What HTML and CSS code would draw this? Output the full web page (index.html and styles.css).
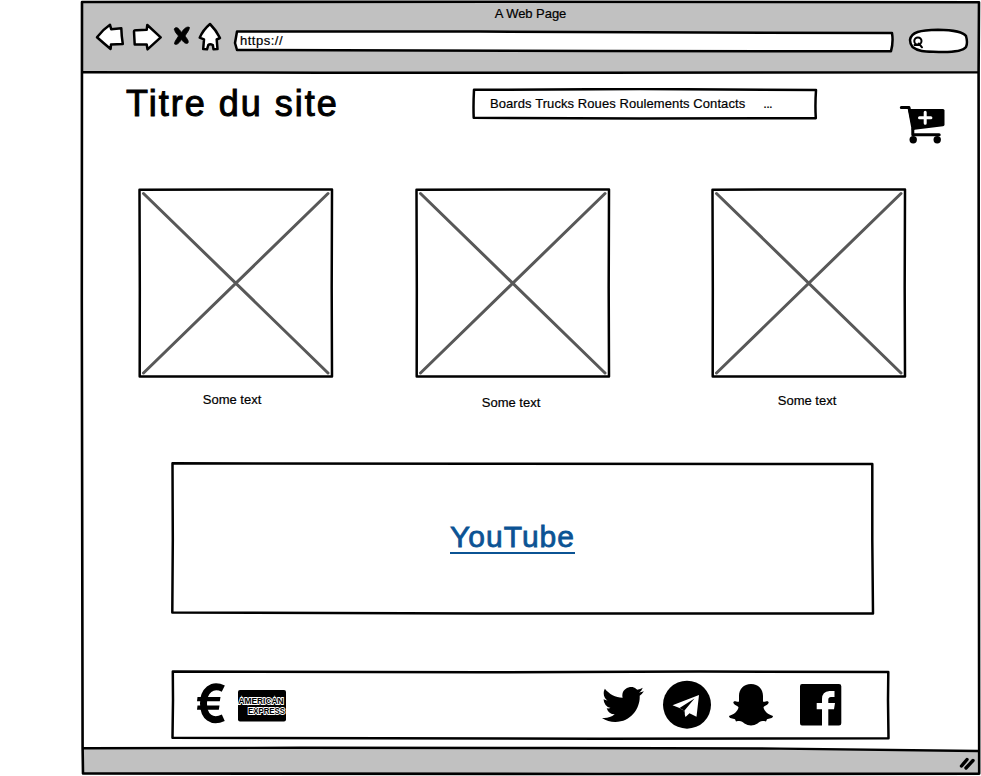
FILE: index.html
```html
<!DOCTYPE html>
<html lang="fr">
<head>
<meta charset="utf-8">
<title>A Web Page</title>
<link rel="stylesheet" href="styles.css">
</head>
<body>
<div class="window">
  <svg class="sketch" viewBox="80 0 901 776">
    <path class="chrome" d="M82 2H979L978.5 73L82 72.5Z"/>
    <path class="chrome" d="M83 748.3L300 747.6L560 748L780 748.4L978 751L979 773.5L83 773.8Z"/>
    <path class="line" d="M82 2L500 1.8L979 2.2L978.6 73L978.8 420L979.2 773.6L600 774L83 773.5L82.6 748L81.8 300Z"/>
    <path class="line thin" d="M82 72.2L320 72.7L600 72.7L978 72.4"/>
    <path class="line thin" d="M83 748.3L300 747.8L560 748L780 748.6L978 751"/>
    <path class="grip" d="M961.5 766L967 759.5M966 768L973 760.5"/>
  </svg>

  <header class="browser">
    <div class="caption">A Web Page</div>
    <div class="toolbar">
      <svg class="tool back" viewBox="94 22 32 34"><path d="M97 37.2Q103 29.5 110 24.8L111.2 29.2L121.3 28.3Q121.5 36 122.8 44L111 44.6L110.6 49Q103.5 43 97 37.2Z"/></svg>
      <svg class="tool forward" viewBox="130 22 34 34"><path d="M134 31.5Q134 30 137 30.3L146.7 29.8L147.3 25L160.7 37.3L147.5 49.3L146.7 44.5L134.7 44.5Z"/></svg>
      <svg class="tool stop" viewBox="172 22 20 34"><path d="M174.5 29C176 26 178.5 28 181.5 32.5C184 28.5 187 26 189.5 27.5C189 31 186.5 33 185 36C187 39 189 40.5 188 43C185.5 44.5 183.5 42 181.5 39.5C179.5 42.5 177 45.5 174.5 44C174.5 41 177 39 178.5 36C176.5 33.5 174.5 32 174.5 29Z"/></svg>
      <svg class="tool home" viewBox="197 22 26 34"><path d="M210 24Q216 30 220 38L216.7 39.5L217.5 49L213.5 49.3L212.8 45Q210 43.5 208.3 45L207 49.3L203.2 49L204 39.3L199.7 37.7Q203 30 210 24Z"/></svg>
      <div class="url">
        <svg class="sketch" viewBox="232 22 664 34"><path class="box" d="M237 31.5L480 31.5L640 32.3L892 33Q893.5 42 891 51.3L600 51L237 50L235 43Z"/></svg>
        <span>https://</span>
      </div>
      <svg class="tool search" viewBox="906 22 64 34"><path d="M910 40C911 32 920 30 938 29.7C955 29.8 964 33 966 36Q968 43 966 47C963 51 953 52 943 52C930 51 920 53 912.5 47Q910 44 910 40Z"/><circle class="lens" cx="917.9" cy="41" r="3.6"/><path class="lens" d="M918.8 43.5L922 47.3M914.5 45L919.5 45"/></svg>
    </div>
  </header>

  <main>
    <div class="masthead">
      <h1>Titre du site</h1>
      <nav>
        <svg class="sketch" viewBox="472 88 346 32"><path class="box" d="M474 89.8L640 89L816 90Q815 105 815.8 118.3L640 118.5L473.7 117.8Q473.2 105 474 89.8Z"/></svg>
        <span>Boards Trucks Roues Roulements Contacts</span><span class="more">...</span>
      </nav>
      <svg class="cart" viewBox="898 103 48 42">
        <path d="M901.3 107.4H909L913 129" class="cart-line"/>
        <path d="M908 109L943 109Q944.5 109 944.5 110.5V124.5Q944.5 126 943 126.2L912.5 130Z"/>
        <path class="cart-line" d="M912.8 129V134.7H939.2"/>
        <circle cx="913.2" cy="139.8" r="3.7"/><circle cx="937.2" cy="139.8" r="3.7"/>
        <path class="plus" d="M925.2 112.2V123.3M919.5 117.7H930.9"/>
      </svg>
    </div>

    <div class="gallery">
      <figure>
        <svg class="photo" viewBox="0 0 196 190"><path class="box" d="M1.5 1.8L100 1.4L194 1.5L193.7 100L194 188.5L100 188.5L1.7 188.5L1.8 100Z"/><path class="cross" d="M5.5 5.5L190 185M190 5.5L5.5 185"/></svg>
        <figcaption>Some text</figcaption>
      </figure>
      <figure>
        <svg class="photo" viewBox="0 0 196 190"><path class="box" d="M1.5 1.8L100 1.4L194 1.5L193.7 100L194 188.5L100 188.5L1.7 188.5L1.8 100Z"/><path class="cross" d="M5.5 5.5L190 185M190 5.5L5.5 185"/></svg>
        <figcaption class="low">Some text</figcaption>
      </figure>
      <figure>
        <svg class="photo" viewBox="0 0 196 190"><path class="box" d="M1.5 1.8L100 1.4L194 1.5L193.7 100L194 188.5L100 188.5L1.7 188.5L1.8 100Z"/><path class="cross" d="M5.5 5.5L190 185M190 5.5L5.5 185"/></svg>
        <figcaption class="mid">Some text</figcaption>
      </figure>
    </div>

    <section class="video">
      <svg class="sketch" viewBox="170 461 705 155"><path class="box" d="M172.5 463.3L480 463.8L872.3 464L872.3 540L873 613.5L480 613.5L172.3 612.5L172.8 540Z"/></svg>
      <a>YouTube</a>
    </section>

    <footer>
      <svg class="sketch" viewBox="170 669 721 73"><path class="box" d="M172.8 671.5L480 672.3L700 671.5L888.3 672L888 700L888.5 738.3L600 738.8L172.5 737.8L173 700Z"/></svg>
      <svg class="euro" viewBox="195 682 30 42"><path class="euro-arc" d="M223.3 688.6C212 683 203.5 691 203.5 703.5C203.5 717 212 723 223.3 717.8"/><path d="M197.5 697H220.5L219.8 701.3H197ZM197.5 705.5H219.5L218.8 709.8H197Z"/></svg>
      <svg class="amex" viewBox="236 689 52 34"><rect x="238" y="690" width="48" height="31.5" rx="2"/><text x="238.5" y="704.3" textLength="45" lengthAdjust="spacingAndGlyphs">AMERICAN</text><text x="248" y="713.8" textLength="37" lengthAdjust="spacingAndGlyphs">EXPRESS</text></svg>
      <svg class="twitter" viewBox="0 2.2 24 19.6" preserveAspectRatio="none"><path d="M23.95 4.57a10 10 0 0 1-2.82.77 4.96 4.96 0 0 0 2.16-2.72c-.95.55-2 .96-3.13 1.18a4.92 4.92 0 0 0-8.38 4.48C7.69 8.09 4.07 6.13 1.64 3.16a4.82 4.82 0 0 0-.67 2.48c0 1.71.87 3.21 2.19 4.1a4.9 4.9 0 0 1-2.23-.62v.06a4.92 4.92 0 0 0 3.95 4.83 5 5 0 0 1-2.21.08 4.94 4.94 0 0 0 4.6 3.42A9.87 9.87 0 0 1 0 19.54a13.99 13.99 0 0 0 7.56 2.21c9.05 0 14-7.5 14-13.98l-.02-.64a9.94 9.94 0 0 0 2.41-2.56z"/></svg>
      <svg class="telegram" viewBox="662 680 50 50"><circle cx="687" cy="704.7" r="24"/><path class="plane" d="M672.5 705.2L699 695L696.5 716.7L689.5 713.3L685.5 717L683.5 710.5L679.5 708Z"/><path class="fold" d="M679.5 708L694.5 698.5L684.5 710.5L685 716L683 710Z"/></svg>
      <svg class="snapchat" viewBox="728 682 46 45"><path d="M751 684C758.5 684 763 689 763 696V701.5C765 702.5 768 699.5 768.7 702.5C768.5 705 764 705.5 763.5 707.5C764.5 711.5 768 714.5 773 716C773 718.5 769 718.5 767 719.2L766 721.5C761 720.5 760 721.5 757.5 723.5C753.5 726 748.5 726 744.5 723.5C742 721.5 741 720.5 736 721.5L735 719.2C733 718.5 729 718.5 729 716C734 714.5 737.5 711.5 738.5 707.5C738 705.5 733.5 705 733.3 702.5C734 699.5 737 702.5 739 701.5V696C739 689 743.5 684 751 684Z"/></svg>
      <svg class="facebook" viewBox="799 683 43 43"><path d="M802 684H839Q841.3 684 841.3 686.3V723.2Q841.3 725.5 839 725.5H828.3V709.3H834L835 703H828.3V699.5Q828.3 697 831 697H834.5V691H829.5Q822 691.5 822 699V703H816.7V709.3H822V725.5H802Q800 725.5 800 723.2V686.3Q800 684 802 684Z"/></svg>
    </footer>
  </main>
</div>
</body>
</html>
```
FILE: styles.css
```css
* { box-sizing: border-box; }
body {
  margin: 0;
  background: #fff;
  color: #000;
  font: 13px/16px "Liberation Sans", Arial, sans-serif;
  -webkit-text-stroke: .2px currentColor;
}
svg { display: block; flex: none; }
.window { position: relative; width: 901px; height: 776px; margin-left: 80px; overflow: hidden; }
.sketch { position: absolute; inset: 0; width: 100%; height: 100%; z-index: -1; }
.chrome { fill: #c1c1c1; }
.line { fill: none; stroke: #000; stroke-width: 2.6; stroke-linejoin: round; }
.thin { stroke-width: 2.4; }
.grip { fill: none; stroke: #000; stroke-width: 3.4; stroke-linecap: round; }
.box { fill: #fff; stroke: #000; stroke-width: 2.5; stroke-linejoin: round; }

.browser { height: 73px; padding-top: 6px; }
.caption { height: 16px; text-align: center; letter-spacing: -.05px; }
.toolbar { display: flex; height: 34px; padding-left: 14px; }
.tool { height: 34px; fill: #fff; stroke: #000; stroke-width: 2.5; stroke-linejoin: round; stroke-linecap: round; }
.back { width: 32px; }
.forward { width: 34px; margin-left: 4px; }
.stop { width: 20px; margin-left: 8px; fill: #000; stroke-width: .8; }
.home { width: 26px; margin-left: 5px; }
.url { position: relative; z-index: 0; width: 664px; margin-left: 9px; padding: 11px 0 0 8px; letter-spacing: .5px; }
.search { width: 64px; margin-left: 10px; }
.search .lens { fill: none; stroke-width: 2; }

.masthead { display: flex; height: 115px; }
h1 {
  width: 346px; margin: 10px 0 0 46px;
  font-size: 36px; font-weight: 400; line-height: 42px; letter-spacing: 2px; white-space: nowrap;
  -webkit-text-stroke: 1px currentColor;
}
nav { position: relative; z-index: 0; width: 346px; height: 32px; margin-top: 15px; padding: 8px 0 0 18px; letter-spacing: .08px; white-space: nowrap; }
.more { margin-left: 18px; letter-spacing: -.7px; }
.cart { width: 48px; height: 42px; margin: 30px 0 0 80px; }
.cart-line { fill: none; stroke: #000; stroke-width: 3; stroke-linecap: round; stroke-linejoin: round; }
.plus { stroke: #fff; stroke-width: 3; stroke-linecap: round; }

.gallery { display: grid; grid-template-columns: 277px 296px 196px; height: 273px; padding-left: 58px; }
figure { width: 196px; margin: 0; text-align: center; }
.photo { width: 196px; height: 190px; }
.cross { stroke: #585858; stroke-width: 3; stroke-linecap: round; }
figcaption { padding-top: 14px; padding-right: 8px; }
.low { padding-top: 17px; padding-right: 4px; }
.mid { padding-top: 15px; padding-right: 4px; }

.video {
  position: relative; z-index: 0; display: flex; justify-content: center;
  width: 705px; height: 155px; margin-left: 90px; padding-top: 59px; padding-right: 20px;
}
.video a {
  height: 34px; border-bottom: 2px solid #0b5394; color: #0b5394;
  font-size: 30px; line-height: 34px; letter-spacing: 1px; -webkit-text-stroke: .8px currentColor;
}
footer {
  position: relative; z-index: 0; display: flex;
  width: 721px; height: 73px; margin: 53px 0 0 90px; padding-left: 25px;
}
.euro { width: 30px; height: 42px; margin-top: 13px; }
.euro-arc { fill: none; stroke: #000; stroke-width: 7; }
.amex { width: 52px; height: 34px; margin: 20px 0 0 11px; overflow: visible; }
.amex text { fill: #000; stroke: #fff; stroke-width: 1.8px; paint-order: stroke; font: bold 9px "Liberation Sans", Arial, sans-serif; }
.twitter { width: 42px; height: 35px; margin: 18px 0 0 314px; }
.telegram { width: 50px; height: 50px; margin: 11px 0 0 18px; }
.plane { fill: #fff; }
.fold { fill: #000; }
.snapchat { width: 46px; height: 45px; margin: 13px 0 0 16px; }
.facebook { width: 43px; height: 43px; margin: 14px 0 0 25px; }
```
